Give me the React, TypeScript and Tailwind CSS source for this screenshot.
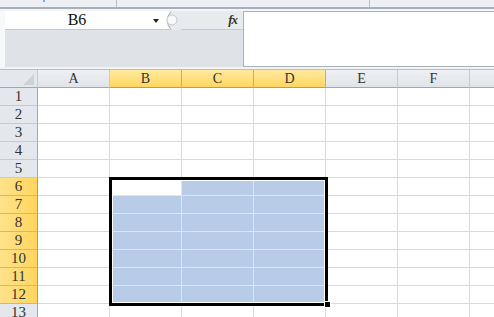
import React from "react";

const cols = ["A", "B", "C", "D", "E", "F"];
const selCols = ["B", "C", "D"];
const rows = Array.from({ length: 13 }, (_, i) => i + 1);

function ColHeader({ label }: { label: string }) {
  const sel = selCols.includes(label);
  return (
    <div
      className={
        sel
          ? "w-[72px] h-[18px] flex items-center justify-center border-r border-b border-r-[#dcae4a] border-b-[#c99a35] bg-gradient-to-b from-[#ffeaa0] to-[#ffd75c] text-[14px] text-[#333]"
          : "w-[72px] h-[18px] flex items-center justify-center border-r border-b border-r-[#c5cbd2] border-b-[#9ea7b2] bg-gradient-to-b from-[#eef0f3] to-[#e0e4e8] text-[14px] text-[#333]"
      }
    >
      {label}
    </div>
  );
}

function Row({ n }: { n: number }) {
  const rowSel = n >= 6 && n <= 12;
  return (
    <div className="flex h-[18px]">
      <div
        className={
          rowSel
            ? "w-[38px] shrink-0 flex items-center justify-center border-r border-b border-r-[#c99a35] border-b-[#e2b555] bg-gradient-to-r from-[#ffe28a] to-[#ffd65c] text-[15px] text-[#333]"
            : "w-[38px] shrink-0 flex items-center justify-center border-r border-b border-r-[#9ea7b2] border-b-[#c5cbd2] bg-[#e4e7eb] text-[15px] text-[#333]"
        }
      >
        {n}
      </div>
      {cols.map((c) => {
        const inSel = rowSel && selCols.includes(c);
        const active = n === 6 && c === "B";
        let cls = "w-[72px] shrink-0 border-r border-b border-[#d9d9d9] bg-white";
        if (inSel && !active) cls = "w-[72px] shrink-0 border-r border-b border-[#dfe6f0] bg-[#b8cce8]";
        if (active) cls = "w-[72px] shrink-0 border-r border-b border-[#dfe6f0] bg-white";
        return <div key={c} className={cls} />;
      })}
      <div className="flex-1 border-b border-[#d9d9d9] bg-white" />
    </div>
  );
}

export default function App() {
  return (
    <div className="w-[494px] h-[317px] overflow-hidden bg-white flex flex-col [font-family:'Liberation_Serif','Noto_Sans_CJK_SC',serif]">
      {/* ribbon remnant */}
      <div className="h-[7px] bg-[#eceff3] flex overflow-hidden text-[11px] text-[#555] [font-family:'Liberation_Sans',sans-serif]">
        <div className="w-[117px] border-r border-[#b9c0c8] pl-[30px] leading-[11px] -mt-[9px]">Clipboard</div>
        <div className="w-[253px] border-r border-[#b9c0c8]" />
        <div className="flex-1 flex justify-end pr-[2px] leading-[11px] -mt-[9px]">Number</div>
      </div>
      <div className="h-[2px] bg-[#a7b0ba]" />
      <div className="h-[2px] bg-[#f4f5f7]" />

      {/* name box + formula bar */}
      <div className="h-[56px] flex">
        <div className="w-[5px] bg-[#f7f8f9]" />
        <div className="w-[238px] flex flex-col">
          <div className="h-[19px] flex border-b border-[#c4cad1]">
            <div className="w-[158px] bg-white flex items-center relative">
              <span className="w-full text-center text-[16px] text-[#111] pr-[14px]">B6</span>
              <svg className="absolute left-[148px] top-[8px]" width="6" height="4" viewBox="0 0 6 4">
                <path d="M0 0H6L3 4Z" fill="#222" />
              </svg>
            </div>
            <div className="w-[18px] bg-white flex items-center">
              <svg width="18" height="19" viewBox="0 0 18 19">
                <path d="M8 0 Q0 9.5 8 19 L18 19 L18 0Z" fill="#e8ebee" />
                <path d="M8 0.5 Q0.5 9.5 8 18.5" fill="none" stroke="#a9b0b9" />
                <circle cx="9" cy="9" r="5" fill="#f8f9fa" stroke="#c3c9d0" />
              </svg>
            </div>
            <div className="flex-1 bg-[#e8ebee] flex items-center justify-end pr-[6px]">
              <span className="italic font-bold text-[13px] text-[#333] tracking-[-1px]">fx</span>
            </div>
          </div>
          <div className="flex-1 bg-[#dfe3e8]" />
        </div>
        <div className="flex-1 bg-white border-l border-t border-b border-[#a9b1bb]" />
      </div>
      <div className="h-[3px] bg-[#f2f3f5] border-b border-[#b7bec6]" />

      {/* grid */}
      <div className="relative flex-1 overflow-hidden">
        <div className="flex h-[18px]">
          <div className="w-[38px] shrink-0 border-r border-b border-r-[#c5cbd2] border-b-[#9ea7b2] bg-[#e4e7eb] flex items-end justify-end pr-[3px] pb-[2px]">
            <svg width="11" height="11" viewBox="0 0 11 11">
              <path d="M11 0V11H0Z" fill="#cdd2d8" />
            </svg>
          </div>
          {cols.map((c) => (
            <ColHeader key={c} label={c} />
          ))}
          <div className="flex-1 border-b border-[#9ea7b2] bg-gradient-to-b from-[#eef0f3] to-[#e0e4e8]" />
        </div>
        {rows.map((n) => (
          <Row key={n} n={n} />
        ))}

        {/* selection outline */}
        <div className="absolute left-[109px] top-[107px] w-[219px] h-[129px] border-[3px] border-black shadow-[inset_0_0_0_1px_#ffffff] pointer-events-none" />
        <div className="absolute left-[324px] top-[231px] w-[7px] h-[7px] bg-black border border-white pointer-events-none" />
      </div>
    </div>
  );
}
